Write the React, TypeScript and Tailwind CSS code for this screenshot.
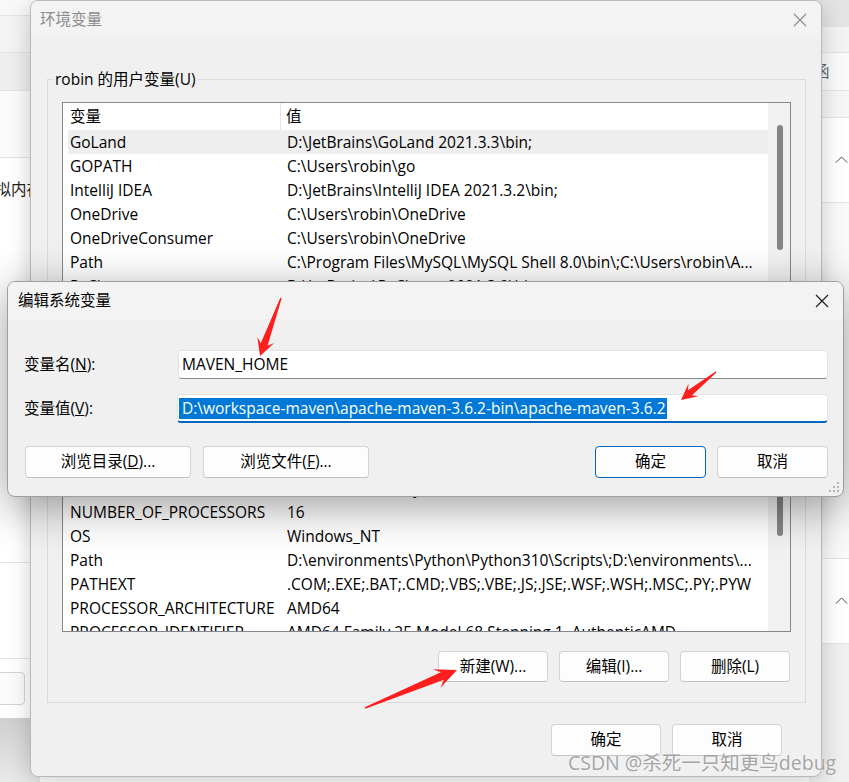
import React from "react";

type Row = [string, string];

const userRows: Row[] = [
	["GoLand", "D:\\JetBrains\\GoLand 2021.3.3\\bin;"],
	["GOPATH", "C:\\Users\\robin\\go"],
	["IntelliJ IDEA", "D:\\JetBrains\\IntelliJ IDEA 2021.3.2\\bin;"],
	["OneDrive", "C:\\Users\\robin\\OneDrive"],
	["OneDriveConsumer", "C:\\Users\\robin\\OneDrive"],
	["Path", "C:\\Program Files\\MySQL\\MySQL Shell 8.0\\bin\\;C:\\Users\\robin\\A..."],
	["PyCharm", "D:\\JetBrains\\PyCharm 2021.3.2\\bin;"],
];

const sysRows: Row[] = [
	["JAVA_HOME", "D:\\environments\\jdk1.8.0_301"],
	["NUMBER_OF_PROCESSORS", "16"],
	["OS", "Windows_NT"],
	["Path", "D:\\environments\\Python\\Python310\\Scripts\\;D:\\environments\\..."],
	["PATHEXT", ".COM;.EXE;.BAT;.CMD;.VBS;.VBE;.JS;.JSE;.WSF;.WSH;.MSC;.PY;.PYW"],
	["PROCESSOR_ARCHITECTURE", "AMD64"],
	["PROCESSOR_IDENTIFIER", "AMD64 Family 25 Model 68 Stepping 1, AuthenticAMD"],
];

// red annotation arrow, tail -> tip
const arrowPoints = (x1: number, y1: number, x2: number, y2: number, head: number, half: number) => {
	const dx = x2 - x1;
	const dy = y2 - y1;
	const len = Math.hypot(dx, dy);
	const ux = dx / len;
	const uy = dy / len;
	const nx = -uy;
	const ny = ux;
	const p = (d: number, w: number) => `${x2 - ux * d + nx * w},${y2 - uy * d + ny * w}`;
	return [
		`${x1 + nx * 0.7},${y1 + ny * 0.7}`,
		p(head * 0.72, half * 0.4),
		p(head, half),
		`${x2},${y2}`,
		p(head, -half),
		p(head * 0.72, -half * 0.4),
		`${x1 - nx * 0.7},${y1 - ny * 0.7}`,
	].join(" ");
};

function ListRow({ row, active }: { row: Row; active?: boolean }) {
	return (
		<div
			className={`flex h-[24px] shrink-0 items-center whitespace-nowrap pl-[2px] leading-[24px] ${
				active ? "bg-[#eeeeee]" : ""
			}`}
		>
			<span className="w-[217px] shrink-0 overflow-hidden">{row[0]}</span>
			<span className="overflow-hidden">{row[1]}</span>
		</div>
	);
}

function Btn({
	children,
	width,
	primary,
}: {
	children: React.ReactNode;
	width: string;
	primary?: boolean;
}) {
	return (
		<button
			type="button"
			className={`${width} flex h-full items-center justify-center rounded-[4px] border bg-[#fdfdfd] text-black ${
				primary ? "border-[#0067c0]" : "border-[#d3d3d3] border-b-[#c2c2c2]"
			}`}
		>
			{children}
		</button>
	);
}

function CloseX({ color }: { color: string }) {
	return (
		<svg width="14" height="14" viewBox="0 0 14 14" className="shrink-0">
			<path d="M1 1 L13 13 M13 1 L1 13" stroke={color} strokeWidth="1.1" fill="none" />
		</svg>
	);
}

function Chevron() {
	return (
		<svg width="16" height="10" viewBox="0 0 16 10">
			<path d="M1 8 L7.5 1.5 L14 8" stroke="#444" strokeWidth="1.1" fill="none" />
		</svg>
	);
}

export default function App() {
	return (
		<div className="relative h-[782px] w-[849px] overflow-hidden bg-white font-[family-name:'Open_Sans','Noto_Sans_CJK_SC',sans-serif] text-[15.5px] text-black">
			{/* windows behind */}
			<div className="absolute inset-0 flex justify-between">
				<div className="flex w-[40px] flex-col">
					<div className="h-[16px] border-b border-[#e3e3e3] bg-[#f8f8f8]" />
					<div className="h-[37px] border-b border-[#e3e3e3] bg-[#f3f3f3]" />
					<div className="h-[38px] border-b border-[#e3e3e3] bg-[#eeeeee]" />
					<div className="h-[67px] border-b border-[#e3e3e3] bg-[#fbfbfb]" />
					<div className="h-[405px] border-b border-[#e3e3e3] bg-white pt-[20px]">
						<div className="-ml-[20px] whitespace-nowrap leading-[22px] text-[#222]">虚拟内存</div>
					</div>
					<div className="h-[96px] border-b border-[#e3e3e3] bg-white" />
					<div className="h-[59px] bg-white pt-[13px]">
						<div className="-ml-[10px] h-[33px] w-[35px] rounded-[4px] border border-[#d3d3d3] bg-[#fbfbfb]" />
					</div>
					<div className="flex-1 bg-gradient-to-b from-[#cfcfcf] to-[#e9e9e9]" />
				</div>
				<div className="flex w-[40px] flex-col">
					<div className="h-[27px] bg-[#e4e4e4]" />
					<div className="h-[26px] border-b border-[#e3e3e3] bg-[#f3f3f3]" />
					<div className="h-[38px] border-b border-[#e3e3e3] bg-[#fafafa] pt-[7px]">
						<div className="ml-[5px] leading-[22px] text-[#666]">函</div>
					</div>
					<div className="h-[27px] border-b border-[#e3e3e3] bg-[#f6f6f6]" />
					<div className="flex h-[85px] items-center border-b border-[#e3e3e3] bg-white pl-[26px]">
						<Chevron />
					</div>
					<div className="h-[356px] border-b border-[#e3e3e3] bg-[#f9f9f9]" />
					<div className="flex h-[85px] items-center border-b border-[#e3e3e3] bg-white pl-[26px]">
						<Chevron />
					</div>
					<div className="flex-1 bg-[#f0f0f0]" />
				</div>
			</div>

			{/* 环境变量 */}
			<div className="absolute left-[30px] top-0 flex h-[777px] w-[792px] flex-col overflow-hidden rounded-[8px] border border-[#b9b9b9] bg-[#f0f0f0] shadow-[0_4px_22px_rgba(0,0,0,0.2)]">
				<div className="flex h-[37px] shrink-0 items-center justify-between bg-[#f3f3f3] pl-[9px] pr-[14px]">
					<span className="text-[#8c8c8c]">环境变量</span>
					<CloseX color="#8a8a8a" />
				</div>
				<div className="ml-[16px] mt-[41px] w-[759px] border border-[#dadada] px-[14px] pb-[20px]">
					<div className="-ml-[9px] -mt-[11px] w-fit bg-[#f0f0f0] px-[2px] leading-[20px]">robin 的用户变量(U)</div>
					<div className="mt-[13px] flex h-[530px] border border-[#828790] bg-white">
						<div className="flex min-w-0 flex-1 flex-col overflow-hidden">
							<div className="flex h-[27px] shrink-0 items-center">
								<span className="flex h-full w-[218px] shrink-0 items-center border-r border-[#e5e5e5] pl-[7px]">变量</span>
								<span className="pl-[5px]">值</span>
							</div>
							<div className="flex flex-col pl-[5px]">
								{userRows.map((r, i) => (
									<ListRow key={r[0] + i} row={r} active={i === 0} />
								))}
								<div className="h-[178px] shrink-0" />
								{sysRows.map((r, i) => (
									<ListRow key={r[0] + i} row={r} />
								))}
							</div>
						</div>
						<div className="flex w-[22px] shrink-0 flex-col bg-[#f1f1f1] pl-[9px]">
							<div className="mt-[22px] h-[125px] w-[6px] rounded-[3px] bg-[#858585]" />
							<div className="mt-[222px] h-[64px] w-[6px] rounded-[3px] bg-[#858585]" />
						</div>
					</div>
					<div className="mt-[19px] flex h-[31px] justify-end gap-[11px] pr-[1px]">
						<Btn width="w-[110px]">新建(W)...</Btn>
						<Btn width="w-[110px]">编辑(I)...</Btn>
						<Btn width="w-[110px]">删除(L)</Btn>
					</div>
				</div>
				<div className="mr-[39px] mt-[21px] flex h-[32px] justify-end gap-[11px]">
					<Btn width="w-[110px]">确定</Btn>
					<Btn width="w-[110px]">取消</Btn>
				</div>
			</div>

			{/* 编辑系统变量 */}
			<div className="absolute left-[7px] top-[281px] flex h-[216px] w-[837px] flex-col overflow-hidden rounded-[8px] border border-[#9e9e9e] bg-[#f0f0f0] shadow-[0_10px_45px_rgba(0,0,0,0.38)]">
				<div className="flex h-[37px] shrink-0 items-center justify-between bg-[#f3f3f3] pl-[10px] pr-[14px]">
					<span>编辑系统变量</span>
					<CloseX color="#1a1a1a" />
				</div>
				<div className="flex flex-col pl-[16px] pr-[15px]">
					<div className="mt-[31px] flex h-[29px] items-center">
						<span className="w-[154px] shrink-0">
							变量名(<u>N</u>):
						</span>
						<div className="flex h-full flex-1 items-center rounded-[4px] border border-[#e3e3e3] border-b-[#8a8a8a] bg-white pl-[3px]">
							MAVEN_HOME
						</div>
					</div>
					<div className="mt-[15px] flex h-[29px] items-center">
						<span className="w-[153px] shrink-0">
							变量值(<u>V</u>):
						</span>
						<div className="flex h-full flex-1 items-center rounded-[4px] border border-[#e3e3e3] border-b-2 border-b-[#0067c0] bg-white pl-[1px]">
							<span className="bg-[#0078d7] pl-[3px] pr-[1px] leading-[21px] text-white">
								D:\workspace-maven\apache-maven-3.6.2-bin\apache-maven-3.6.2
							</span>
						</div>
					</div>
					<div className="mt-[23px] flex h-[32px] pl-[1px]">
						<div className="flex gap-[12px]">
							<Btn width="w-[166px]">
								浏览目录(<u>D</u>)...
							</Btn>
							<Btn width="w-[166px]">
								浏览文件(<u>F</u>)...
							</Btn>
						</div>
						<div className="ml-auto flex gap-[11px]">
							<Btn width="w-[111px]" primary>
								确定
							</Btn>
							<Btn width="w-[111px]">取消</Btn>
						</div>
					</div>
				</div>
				<svg width="12" height="12" viewBox="0 0 12 12" className="absolute bottom-[3px] right-[3px]">
					{[
						[9, 1],
						[9, 5],
						[5, 5],
						[9, 9],
						[5, 9],
						[1, 9],
					].map(([x, y]) => (
						<rect key={`${x}-${y}`} x={x} y={y} width="2" height="2" fill="#b4b4b4" />
					))}
				</svg>
			</div>

			{/* annotations */}
			<svg className="pointer-events-none absolute inset-0" width="849" height="782" viewBox="0 0 849 782">
				<polygon points={arrowPoints(281, 298, 260, 356, 17, 9)} fill="#ff1e1e" />
				<polygon points={arrowPoints(716, 372, 681, 400, 16, 8)} fill="#ff1e1e" />
				<polygon points={arrowPoints(365, 708, 457, 670, 22, 10)} fill="#ff1e1e" />
			</svg>

			<div className="pointer-events-none absolute left-[568px] top-[749px] whitespace-nowrap text-[19.5px] leading-[28px] text-[#a4a4a4] [text-shadow:0_0_2px_#ffffff]">
				CSDN @杀死一只知更鸟debug
			</div>
		</div>
	);
}
